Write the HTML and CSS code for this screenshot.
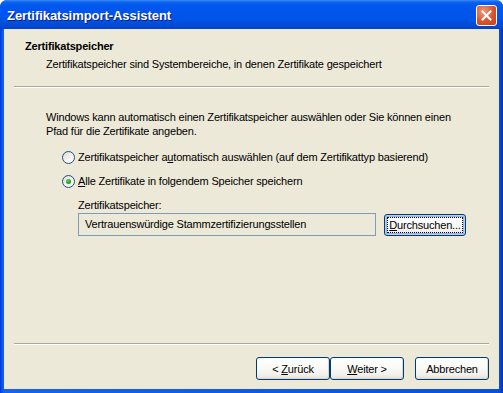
FILE: index.html
```html
<!DOCTYPE html>
<html lang="de">

<head>
    <meta charset="UTF-8">
    <meta name="viewport" content="width=device-width, initial-scale=1.0">
    <title>Zertifikatsimport-Assistent</title>
    <link rel="stylesheet" href="styles.css">
</head>

<body>
    <div class="window">
        <!-- title bar -->
        <div class="titlebar">
            <span class="title">Zertifikatsimport-Assistent</span>
            <span class="close">
                <svg width="11" height="11" viewBox="0 0 11 11">
                    <path d="M1.5 1.5 L9.5 9.5 M9.5 1.5 L1.5 9.5" stroke="#fff" stroke-width="2" stroke-linecap="square" />
                </svg>
            </span>
        </div>

        <div class="client">
            <div class="header">
                <h1>Zertifikatspeicher</h1>
                <p>Zertifikatspeicher sind Systembereiche, in denen Zertifikate gespeichert</p>
            </div>
            <div class="etched"></div>

            <div class="content">
                <p class="intro">Windows kann automatisch einen Zertifikatspeicher auswählen oder Sie können einen<br>Pfad für die Zertifikate angeben.</p>

                <label class="radio">
                    <span class="dot"></span>
                    <span>Zertifikatspeicher a<u>u</u>tomatisch auswählen (auf dem Zertifikattyp basierend)</span>
                </label>
                <label class="radio checked">
                    <span class="dot"></span>
                    <span><u>A</u>lle Zertifikate in folgendem Speicher speichern</span>
                </label>

                <div class="store">
                    <div class="store-label">Zertifikatspeicher:</div>
                    <div class="store-row">
                        <div class="field">Vertrauenswürdige Stammzertifizierungsstellen</div>
                        <button class="btn browse"><span class="focus-ring"><u>D</u>urchsuchen...</span></button>
                    </div>
                </div>
            </div>

            <div class="etched"></div>
            <div class="buttons">
                <button class="btn">&lt; <u>Z</u>urück</button>
                <button class="btn"><u>W</u>eiter &gt;</button>
                <button class="btn cancel">Abbrechen</button>
            </div>
        </div>
    </div>
</body>

</html>
```

FILE: styles.css
```css
body {
    margin: 0;
    background: #fff;
    font-family: "Liberation Sans", Arial, sans-serif;
    font-size: 11px;
    letter-spacing: -0.18px;
    color: #000;
}

.window {
    width: 503px;
    height: 393px;
    display: flex;
    flex-direction: column;
    background: linear-gradient(to right, #0831D9, #0058EE 2px, #1563F0 4px, #0A4FE0 calc(100% - 4px), #0046D5 calc(100% - 2px), #002CAB);
    border-radius: 7px 7px 0 0;
    overflow: hidden;
}

/* title bar */
.titlebar {
    height: 29px;
    flex: none;
    display: flex;
    align-items: center;
    padding: 0 6px 0 7px;
    background: linear-gradient(to bottom, #3A8BF7 0, #0C64EC 2px, #0058EE 5px, #0055EB 14px, #0053E6 20px, #0049D4 26px, #0A3FC4 29px);
}

.title {
    flex: 1;
    color: #fff;
    font-weight: bold;
    font-size: 13px;
    letter-spacing: -0.05px;
    text-shadow: 1px 1px 0 #0A1883;
    padding-top: 1px;
}

.close {
    width: 19px;
    height: 19px;
    border: 1px solid #fff;
    border-radius: 3px;
    background: radial-gradient(circle at 35% 30%, #EF9A7E, #D9532D 55%, #C4411A);
    display: flex;
    align-items: center;
    justify-content: center;
    margin-top: 2px;
}

/* dialog body */
.client {
    flex: 1;
    margin: 0 4px 4px 4px;
    background: #ECE9D8;
    display: flex;
    flex-direction: column;
}

.header {
    height: 57px;
    padding: 11px 0 0 21px;
    box-sizing: border-box;
}

.header h1 {
    margin: 0;
    font-size: 11px;
    line-height: 13px;
}

.header p {
    margin: 5px 0 0 21px;
    line-height: 13px;
}

.etched {
    margin: 0 10px;
    border-top: 1px solid #ACA899;
    border-bottom: 1px solid #fff;
}

.content {
    flex: 1;
    padding: 22px 0 0 42px;
}

.intro {
    margin: 0;
    line-height: 14px;
}

.radio {
    display: flex;
    align-items: center;
    gap: 3px;
    height: 16px;
    margin: 11px 0 0 16px;
}

.radio + .radio {
    margin-top: 8px;
}

.dot {
    width: 11px;
    height: 11px;
    border: 1px solid #1C5180;
    border-radius: 50%;
    background: linear-gradient(135deg, #DCDBD1, #F6F5F1 60%, #fff);
    display: flex;
    align-items: center;
    justify-content: center;
}

.checked .dot::after {
    content: "";
    width: 5px;
    height: 5px;
    border-radius: 50%;
    background: radial-gradient(circle at 40% 35%, #55D451, #21A121 60%, #187A18);
}

.store {
    margin: 9px 0 0 32px;
}

.store-label {
    line-height: 14px;
}

.store-row {
    display: flex;
    align-items: flex-start;
    margin-top: 1px;
}

.field {
    width: 298px;
    height: 23px;
    box-sizing: border-box;
    border: 1px solid #7F9DB9;
    padding-left: 6px;
    line-height: 21px;
}

/* XP buttons */
.btn {
    font-family: "Liberation Sans", Arial, sans-serif;
    font-size: 11px;
    letter-spacing: -0.18px;
    color: #000;
    width: 74px;
    height: 23px;
    padding: 0;
    border: 1px solid #003C74;
    border-radius: 3px;
    background: linear-gradient(to bottom, #FFFFFF, #FBFBF9 40%, #F1F0EC 80%, #E3E0D6);
    box-shadow: inset -1px -1px 0 #DCD7CB;
}

.browse {
    width: 82px;
    height: 22px;
    margin: 1px 0 0 8px;
    padding: 2px;
    box-shadow: inset 0 0 0 1px #B6CEF3, inset 0 0 0 2px #93B4EA;
}

.focus-ring {
    display: block;
    border: 1px dotted #000;
    line-height: 14px;
}

.buttons {
    display: flex;
    justify-content: flex-end;
    padding: 12px 10px 9px 0;
}

.cancel {
    margin-left: 11px;
}
```
